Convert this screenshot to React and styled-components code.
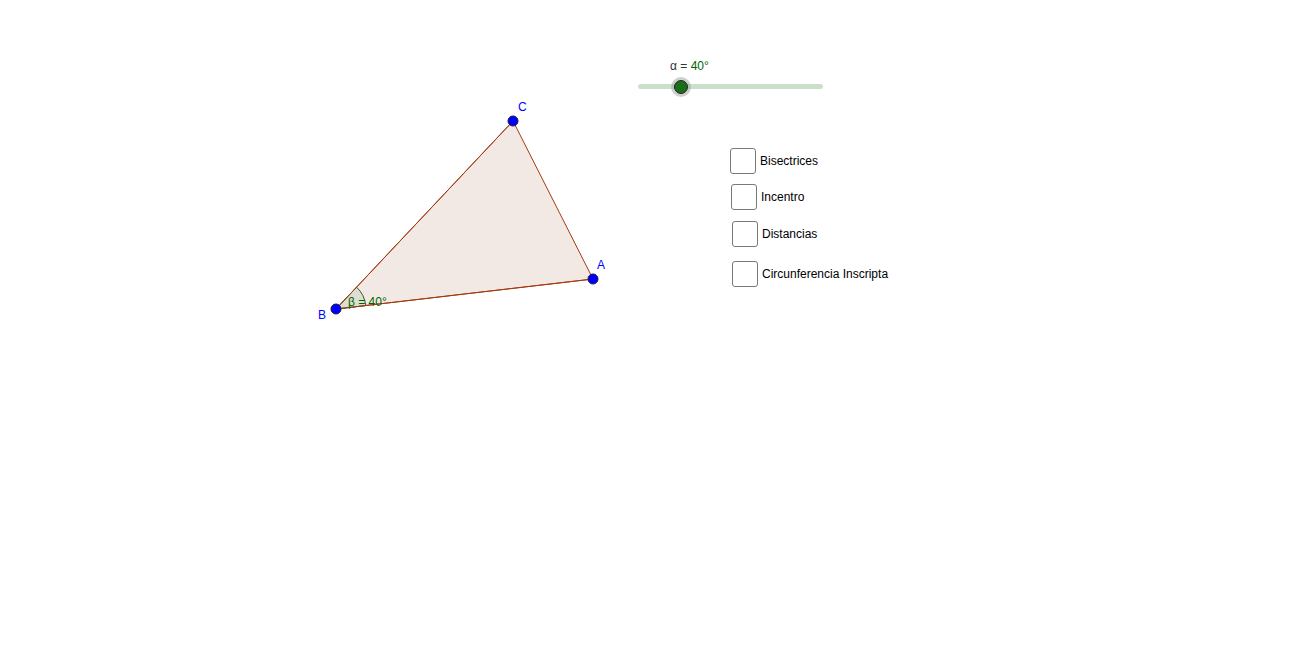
import React from "react";
import styled, { createGlobalStyle } from "styled-components";

const GlobalStyle = createGlobalStyle`
  html, body {
    margin: 0;
    padding: 0;
    background: #ffffff;
    font-family: "Liberation Sans", Arial, sans-serif;
  }
`;

const B = { x: 336, y: 309 };
const C = { x: 513, y: 121 };
const A = { x: 593, y: 279 };

const options = [
  { label: "Bisectrices", shift: 0, top: 0 },
  { label: "Incentro", shift: 1, top: 10 },
  { label: "Distancias", shift: 2, top: 11 },
  { label: "Circunferencia Inscripta", shift: 2, top: 14 },
];

const Canvas = styled.div`
  position: relative;
  width: 1296px;
  height: 647px;
  overflow: hidden;
  background: #ffffff;
`;

const Drawing = styled.svg`
  position: absolute;
  left: 0;
  top: 0;
`;

const SliderBox = styled.div`
  position: absolute;
  left: 638px;
  top: 59px;
  width: 185px;
  display: flex;
  flex-direction: column;
`;

const SliderLabel = styled.div`
  font-size: 12px;
  color: #333333;
  margin-left: 32px;
  line-height: 14px;
  span {
    color: #006400;
  }
`;

const Track = styled.div`
  position: relative;
  margin-top: 11px;
  height: 5px;
  border-radius: 3px;
  background: #cbe0cb;
`;

const Thumb = styled.div`
  position: absolute;
  top: 50%;
  width: 12px;
  height: 12px;
  border-radius: 50%;
  background: #1a6e1a;
  border: 1px solid #1f2a1f;
  box-shadow: 0 0 0 3px rgba(150, 150, 150, 0.45);
  transform: translate(-50%, -50%);
`;

const CheckList = styled.div`
  position: absolute;
  left: 730px;
  top: 148px;
  display: flex;
  flex-direction: column;
`;

const CheckRow = styled.label`
  display: flex;
  align-items: center;
  gap: 4px;
  margin-left: ${(p) => p.$shift}px;
  margin-top: ${(p) => p.$top}px;
  font-size: 12px;
  color: #000000;
`;

const Box = styled.span`
  width: 24px;
  height: 24px;
  border: 1px solid #7a7a7a;
  border-radius: 3px;
  background: #ffffff;
`;

export default function App() {
  const r = 30;
  const ba = { x: A.x - B.x, y: A.y - B.y };
  const bc = { x: C.x - B.x, y: C.y - B.y };
  const la = Math.hypot(ba.x, ba.y);
  const lc = Math.hypot(bc.x, bc.y);
  const p1 = { x: B.x + (ba.x / la) * r, y: B.y + (ba.y / la) * r };
  const p2 = { x: B.x + (bc.x / lc) * r, y: B.y + (bc.y / lc) * r };
  const alpha = 40;
  const thumbPct = ((681 - 638) / 185) * 100;

  return (
    <>
      <GlobalStyle />
      <Canvas>
        <Drawing width="1296" height="647" viewBox="0 0 1296 647">
          <polygon
            points={`${B.x},${B.y} ${C.x},${C.y} ${A.x},${A.y}`}
            fill="#f3e9e4"
            stroke="#a33a10"
            strokeWidth="1"
          />
          <path
            d={`M${B.x},${B.y} L${p1.x},${p1.y} A${r},${r} 0 0 0 ${p2.x},${p2.y} Z`}
            fill="#d7dccd"
            fillOpacity="0.8"
            stroke="#2f5a2f"
            strokeWidth="1"
          />
          <line x1={B.x} y1={B.y} x2={C.x} y2={C.y} stroke="#a33a10" strokeWidth="1" />
          <line x1={B.x} y1={B.y} x2={A.x} y2={A.y} stroke="#a33a10" strokeWidth="1" />
          <text x="348" y="306" fontSize="12" fill="#006400" fontFamily="Liberation Sans, Arial, sans-serif">
            β = 40°
          </text>
          {[A, B, C].map((p, i) => (
            <circle key={i} cx={p.x} cy={p.y} r="5" fill="#0000ff" stroke="#1a1a40" strokeWidth="1" />
          ))}
          <g fontSize="12" fill="#0000ff" fontFamily="Liberation Sans, Arial, sans-serif">
            <text x="518" y="111">C</text>
            <text x="597" y="269">A</text>
            <text x="318" y="319">B</text>
          </g>
        </Drawing>

        <SliderBox>
          <SliderLabel>
            α = <span>{alpha}°</span>
          </SliderLabel>
          <Track>
            <Thumb style={{ left: `${thumbPct}%` }} />
          </Track>
        </SliderBox>

        <CheckList>
          {options.map((o) => (
            <CheckRow key={o.label} $shift={o.shift} $top={o.top}>
              <Box />
              {o.label}
            </CheckRow>
          ))}
        </CheckList>
      </Canvas>
    </>
  );
}
